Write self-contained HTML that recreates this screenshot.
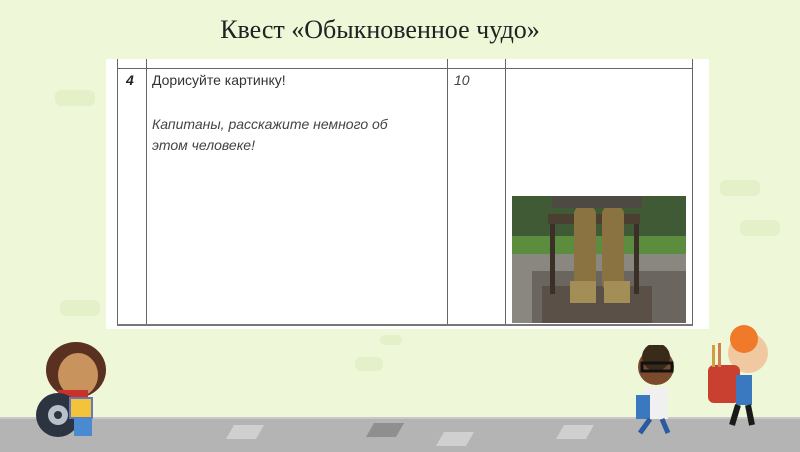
<!DOCTYPE html>
<html><head><meta charset="utf-8"><style>
body{margin:0;width:800px;height:450px;overflow:hidden;background:#eef8d8;position:relative;font-family:"Liberation Sans",sans-serif}
.a{position:absolute}
.blob{position:absolute;background:#e3f0c8;border-radius:6px}
</style></head><body>
<div class="blob" style="left:55px;top:90px;width:40px;height:16px"></div>
<div class="blob" style="left:60px;top:300px;width:40px;height:16px"></div>
<div class="blob" style="left:720px;top:180px;width:40px;height:16px"></div>
<div class="blob" style="left:740px;top:220px;width:40px;height:16px"></div>
<div class="blob" style="left:380px;top:335px;width:22px;height:10px"></div>
<div class="blob" style="left:355px;top:357px;width:28px;height:14px"></div>
<div class="a" style="left:180px;top:15px;width:400px;text-align:center;font-family:'Liberation Serif',serif;font-size:26px;color:#222">Квест «Обыкновенное чудо»</div>
<div class="a" style="left:106px;top:59px;width:603px;height:270px;background:#fff"></div>
<div class="a" style="left:117px;top:59px;width:575px;height:266px;border-left:1px solid #666"></div>
<div class="a" style="left:146px;top:59px;width:1px;height:266px;background:#666"></div>
<div class="a" style="left:447px;top:59px;width:1px;height:266px;background:#666"></div>
<div class="a" style="left:505px;top:59px;width:1px;height:266px;background:#666"></div>
<div class="a" style="left:692px;top:59px;width:1px;height:266px;background:#666"></div>
<div class="a" style="left:117px;top:68px;width:576px;height:1px;background:#666"></div>
<div class="a" style="left:117px;top:324px;width:576px;height:2px;background:#777"></div>
<div class="a" style="left:126px;top:72px;font-size:14px;font-style:italic;font-weight:bold;color:#222">4</div>
<div class="a" style="left:152px;top:72px;font-size:14px;color:#333">Дорисуйте картинку!</div>
<div class="a" style="left:454px;top:72px;font-size:14px;font-style:italic;color:#444">10</div>
<div class="a" style="left:152px;top:114px;font-size:14px;font-style:italic;color:#444;line-height:21px;width:270px">Капитаны, расскажите немного об этом человеке!</div>
<svg class="a" style="left:512px;top:196px" width="174" height="127" viewBox="0 0 174 127">
<rect width="174" height="127" fill="#5b6b4a"/>
<rect y="0" width="174" height="45" fill="#3f5a34"/>
<rect y="40" width="174" height="20" fill="#5c8d3e"/>
<rect y="58" width="174" height="69" fill="#8a8680"/>
<rect x="20" y="75" width="154" height="52" fill="#6b6560"/>
<rect x="30" y="90" width="110" height="37" fill="#5a5048"/>
<rect x="36" y="18" width="92" height="10" fill="#4a3f30"/>
<rect x="38" y="28" width="5" height="70" fill="#3a3028"/>
<rect x="122" y="28" width="5" height="70" fill="#3a3028"/>
<rect x="62" y="10" width="22" height="85" rx="8" fill="#8a7340"/>
<rect x="90" y="10" width="22" height="85" rx="8" fill="#8a7340"/>
<rect x="58" y="85" width="26" height="22" fill="#a38e55"/>
<rect x="92" y="85" width="26" height="22" fill="#a38e55"/>
<rect x="40" y="0" width="90" height="12" fill="#4d4a44"/>
</svg>
<div class="a" style="left:0;top:417px;width:800px;height:33px;background:#b4b4b4;border-top:2px solid #c8c8c8"></div>
<div class="a" style="left:230px;top:425px;width:30px;height:14px;background:#d0d0d0;transform:skewX(-30deg)"></div>
<div class="a" style="left:370px;top:423px;width:30px;height:14px;background:#8f8f8f;transform:skewX(-30deg)"></div>
<div class="a" style="left:440px;top:432px;width:30px;height:14px;background:#d0d0d0;transform:skewX(-30deg)"></div>
<div class="a" style="left:560px;top:425px;width:30px;height:14px;background:#d0d0d0;transform:skewX(-30deg)"></div>
<svg class="a" style="left:28px;top:330px" width="90" height="112">
<ellipse cx="48" cy="40" rx="30" ry="28" fill="#5a3020"/>
<ellipse cx="50" cy="45" rx="20" ry="22" fill="#c9935e"/>
<rect x="30" y="60" width="30" height="25" fill="#c8322a"/>
<circle cx="30" cy="85" r="22" fill="#2b3440"/><circle cx="30" cy="85" r="10" fill="#b8c0c8"/><circle cx="30" cy="85" r="4" fill="#2b3440"/>
<rect x="42" y="68" width="22" height="20" fill="#f2c43b" stroke="#6a77b5" stroke-width="2"/>
<rect x="46" y="88" width="18" height="18" fill="#4a8ad0"/>
</svg>
<svg class="a" style="left:628px;top:345px" width="60" height="100">
<circle cx="28" cy="22" r="18" fill="#7a4a2a"/><circle cx="28" cy="12" r="14" fill="#3a2a1a"/>
<rect x="14" y="18" width="30" height="8" fill="none" stroke="#111" stroke-width="3"/>
<rect x="16" y="42" width="24" height="32" fill="#f0f0f0"/>
<rect x="8" y="50" width="14" height="24" fill="#3a78c0"/>
<path d="M22 74 L12 88 M34 74 L40 88" stroke="#2a5ba0" stroke-width="5"/>
</svg>
<svg class="a" style="left:700px;top:325px" width="80" height="110">
<circle cx="48" cy="28" r="20" fill="#f0c9a0"/><circle cx="44" cy="14" r="14" fill="#f07a2a"/>
<rect x="8" y="40" width="32" height="38" rx="6" fill="#c94030"/>
<rect x="12" y="20" width="3" height="22" fill="#d0a040"/><rect x="18" y="18" width="3" height="24" fill="#d08050"/>
<rect x="36" y="50" width="16" height="30" fill="#3a78c0"/>
<path d="M38 80 L32 100 M48 80 L52 100" stroke="#1a1a1a" stroke-width="6"/>
</svg>
</body></html>
